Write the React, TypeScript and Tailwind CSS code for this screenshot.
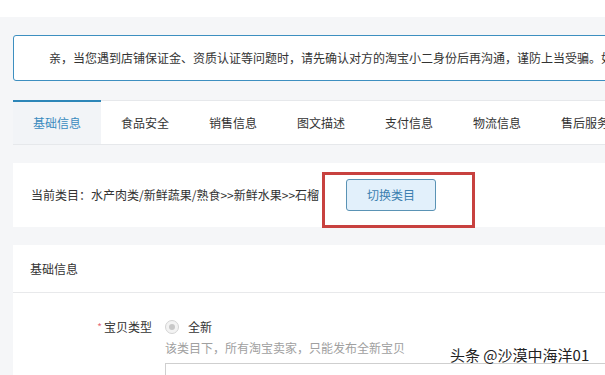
import React from 'react';

const tabs = ['基础信息', '食品安全', '销售信息', '图文描述', '支付信息', '物流信息', '售后服务'];

const App: React.FC = () => {
  return (
    <div
      className="relative w-[605px] h-[375px] overflow-hidden bg-[#f5f6f8] text-[#333]"
      style={{ fontFamily: '"Noto Sans CJK SC", "Noto Sans", sans-serif' }}
    >
      <div className="h-[17px] bg-white" />

      <div className="pl-[13px] pt-[18px] w-[700px]">
        {/* notice */}
        <div className="h-[46px] w-[680px] bg-white border border-[#3d8fc0] rounded-[3px] flex items-center pl-[35px] text-[12px] text-[#333] whitespace-nowrap">
          亲，当您遇到店铺保证金、资质认证等问题时，请先确认对方的淘宝小二身份后再沟通，谨防上当受骗。如有疑问请联系客服。
        </div>

        {/* tabs */}
        <div className="mt-[19px] h-[45px] bg-white border-t border-b border-[#e6e8eb] flex text-[12px]">
          {tabs.map((t, i) => (
            <div
              key={t}
              className={
                i === 0
                  ? 'w-[88px] -mt-px border-t-2 border-[#2d86b8] bg-[#f2f4f7] text-[#3a8bbf] flex items-center justify-center'
                  : 'w-[88px] flex items-center justify-center text-[#333]'
              }
            >
              {t}
            </div>
          ))}
        </div>

        {/* category */}
        <div className="relative mt-[18px] h-[64px] bg-white flex items-center pl-[18px] text-[12px]">
          <span className="whitespace-nowrap">当前类目：水产肉类/新鲜蔬果/熟食&gt;&gt;新鲜水果&gt;&gt;石榴</span>
          <button className="ml-[27px] w-[90px] h-[32px] rounded-[3px] border border-[#5a93b5] bg-[#e2f0fb] text-[#3d80b0] text-[12px]">
            切换类目
          </button>
          <div className="absolute left-[309px] top-[9px] w-[153px] h-[56px] border-[3px] border-[#c8413f]" />
        </div>

        {/* basic info */}
        <div className="mt-[18px] bg-white h-[200px]">
          <div className="h-[48px] border-b border-[#e8e9eb] flex items-center pl-[17px] text-[12px]">
            基础信息
          </div>
          <div className="flex pt-[25px] text-[12px]">
            <div className="w-[139px] flex justify-end items-start leading-[18px]">
              <span className="text-[#e5687a] text-[10px] mr-[2px]">*</span>
              <span>宝贝类型</span>
            </div>
            <div className="ml-[13px] leading-[18px]">
              <div className="flex items-center">
                <span className="w-[14px] h-[14px] rounded-full border border-[#d4d4d4] bg-[#f3f3f3] flex items-center justify-center">
                  <span className="w-[6px] h-[6px] rounded-full bg-[#c8c8c8]" />
                </span>
                <span className="ml-[9px]">全新</span>
              </div>
              <div className="mt-[3px] text-[#a0a0a0]">该类目下，所有淘宝卖家，只能发布全新宝贝</div>
              <div className="mt-[6px] w-[500px] h-[30px] border border-[#cfcfcf]" />
            </div>
          </div>
        </div>
      </div>

      {/* watermark */}
      <div className="absolute left-[450px] top-[344px] text-[15px] text-[#222] whitespace-nowrap [text-shadow:0_0_2px_#fff]">
        头条 @沙漠中海洋01
      </div>
    </div>
  );
};

export default App;
